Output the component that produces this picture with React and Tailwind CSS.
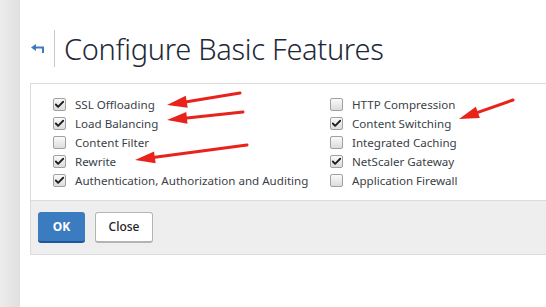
import { Check } from 'lucide-react'

const left = [
  { label: 'SSL Offloading', on: true },
  { label: 'Load Balancing', on: true },
  { label: 'Content Filter', on: false },
  { label: 'Rewrite', on: true },
  { label: 'Authentication, Authorization and Auditing', on: true },
]

const right = [
  { label: 'HTTP Compression', on: false },
  { label: 'Content Switching', on: true },
  { label: 'Integrated Caching', on: false },
  { label: 'NetScaler Gateway', on: true },
  { label: 'Application Firewall', on: false },
]

function Box({ on }) {
  return (
    <span className="flex items-center justify-center w-[13px] h-[13px] rounded-[2px] border border-[#a0a0a0] bg-gradient-to-b from-[#fafafa] to-[#dcdcdc] shrink-0">
      {on && <Check size={11} strokeWidth={4} className="text-[#1e1e1e]" />}
    </span>
  )
}

function Row({ label, on }) {
  return (
    <label className="flex items-center h-[19px] gap-[9px]">
      <Box on={on} />
      <span className="text-[11.6px] text-[#3a3f47] whitespace-nowrap">{label}</span>
    </label>
  )
}

// red annotation arrows drawn over the form
function Arrow({ x1, y1, x2, y2 }) {
  const a = Math.atan2(y2 - y1, x2 - x1)
  const len = 20
  const w = 6
  const bx = x2 - len * Math.cos(a)
  const by = y2 - len * Math.sin(a)
  const px = -Math.sin(a) * w
  const py = Math.cos(a) * w
  return (
    <g>
      <line x1={x1} y1={y1} x2={bx} y2={by} stroke="#e8231b" strokeWidth="3" strokeLinecap="round" />
      <polygon points={`${x2},${y2} ${bx + px},${by + py} ${bx - px},${by - py}`} fill="#e8231b" />
    </g>
  )
}

export default function App() {
  return (
    <div className="relative w-[546px] h-[307px] overflow-hidden bg-white flex font-['Noto_Sans',sans-serif]">
      {/* left rail */}
      <div className="w-[20px] shrink-0 bg-gradient-to-r from-[#ececec] to-[#e0e0e0]" />

      <div className="flex-1 flex flex-col pl-[10px]">
        {/* header */}
        <div className="flex items-center h-[37px] mt-[30px] mb-[16px]">
          <svg width="14" height="10" viewBox="0 0 14 10" className="ml-[1px] mt-[1px]">
            <path d="M12 9V3.5H4" fill="none" stroke="#3d7bc1" strokeWidth="2" />
            <polygon points="0,3.5 5,0 5,7" fill="#3d7bc1" />
          </svg>
          <div className="w-px h-[37px] bg-[#c8c8c8] ml-[9px] mr-[9px]" />
          <h1 className="text-[29px] font-light text-[#1e2836] leading-none tracking-[-0.3px]">Configure Basic Features</h1>
        </div>

        {/* panel */}
        <div className="border border-[#dcdcdc] border-r-0 w-[600px]">
          <div className="flex pl-[22px] pt-[11px] pb-[10px]">
            <div className="w-[277px] flex flex-col">
              {left.map(r => <Row key={r.label} {...r} />)}
            </div>
            <div className="flex flex-col">
              {right.map(r => <Row key={r.label} {...r} />)}
            </div>
          </div>
          <div className="bg-[#eeeeee] border-t border-[#dcdcdc] h-[54px] flex items-center gap-[10px] pl-[7px]">
            <button className="w-[47px] h-[31px] rounded-[3px] bg-[#3b7bc0] border-b-2 border-[#1f579c] text-white text-[12px] font-bold">
              OK
            </button>
            <button className="w-[58px] h-[31px] rounded-[3px] bg-white border border-[#b4b4b4] border-b-2 text-[#222] text-[12px] font-medium">
              Close
            </button>
          </div>
        </div>
      </div>

      <svg className="absolute inset-0 pointer-events-none" width="546" height="307">
        <Arrow x1={240} y1={93} x2={167} y2={105} />
        <Arrow x1={243} y1={112} x2={167} y2={120} />
        <Arrow x1={247} y1={145} x2={135} y2={160} />
        <Arrow x1={513} y1={100} x2={459} y2={119} />
      </svg>
    </div>
  )
}
